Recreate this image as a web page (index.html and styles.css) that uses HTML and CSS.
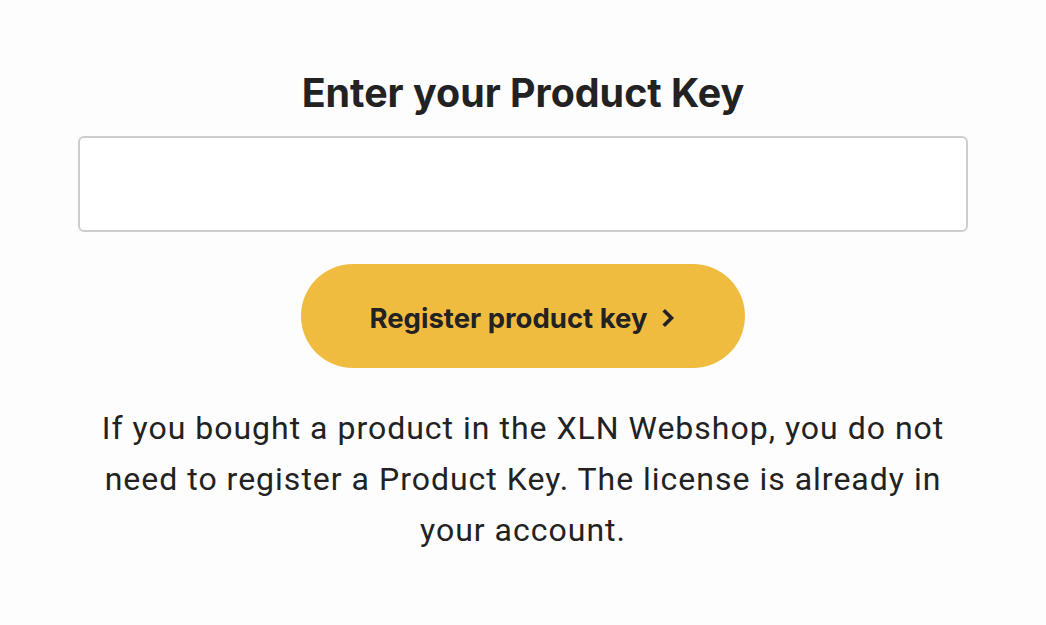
FILE: index.html
```html
<!DOCTYPE html>
<html lang="en">
<head>
<meta charset="utf-8">
<title>Enter your Product Key</title>
<link rel="stylesheet" href="styles.css">
</head>
<body>
<main class="panel">
  <h1 class="title">Enter your Product Key</h1>
  <input class="key-input" type="text" aria-label="Product Key">
  <button class="register-btn" type="button">
    <span>Register product key</span>
    <svg class="chev" width="14" height="20" viewBox="0 0 14 20" aria-hidden="true"><path d="M3 3.5l6.5 6.5-6.5 6.5" fill="none" stroke="#222" stroke-width="3.6" stroke-linecap="square" stroke-linejoin="miter"/></svg>
  </button>
  <p class="note">If you bought a product in the XLN Webshop, you do not need to register a Product Key. The license is already in your account.</p>
</main>
</body>
</html>
```

FILE: styles.css
```css
html, body {
  margin: 0;
  padding: 0;
  background: #fdfdfd;
}
body {
  font-family: Inter, "Noto Sans", sans-serif;
  color: #222;
}
.panel {
  width: 890px;
  margin: 0 auto;
  padding-top: 68px;
  display: flex;
  flex-direction: column;
  align-items: center;
}
.title {
  margin: 0;
  font-size: 39.4px;
  font-weight: 700;
  line-height: 50px;
  letter-spacing: 0;
}
.key-input {
  box-sizing: border-box;
  margin-top: 18px;
  width: 890px;
  height: 96px;
  border: 2px solid #cdcdcd;
  border-radius: 6px;
  background: #fff;
}
.register-btn {
  margin-top: 32px;
  width: 444px;
  height: 104px;
  border: none;
  border-radius: 52px;
  background: #f0bc40;
  color: #222;
  font-family: Inter, "Noto Sans", sans-serif;
  font-size: 27.5px;
  font-weight: 700;
  display: flex;
  align-items: center;
  justify-content: center;
  gap: 15px;
  padding: 4px 0 0;
}
.chev { display: block; }
.note {
  margin: 35px 0 0;
  width: 860px;
  text-align: center;
  font-family: Roboto, "Noto Sans", sans-serif;
  font-size: 32px;
  line-height: 51px;
  font-weight: 400;
  letter-spacing: 1px;
}
```
